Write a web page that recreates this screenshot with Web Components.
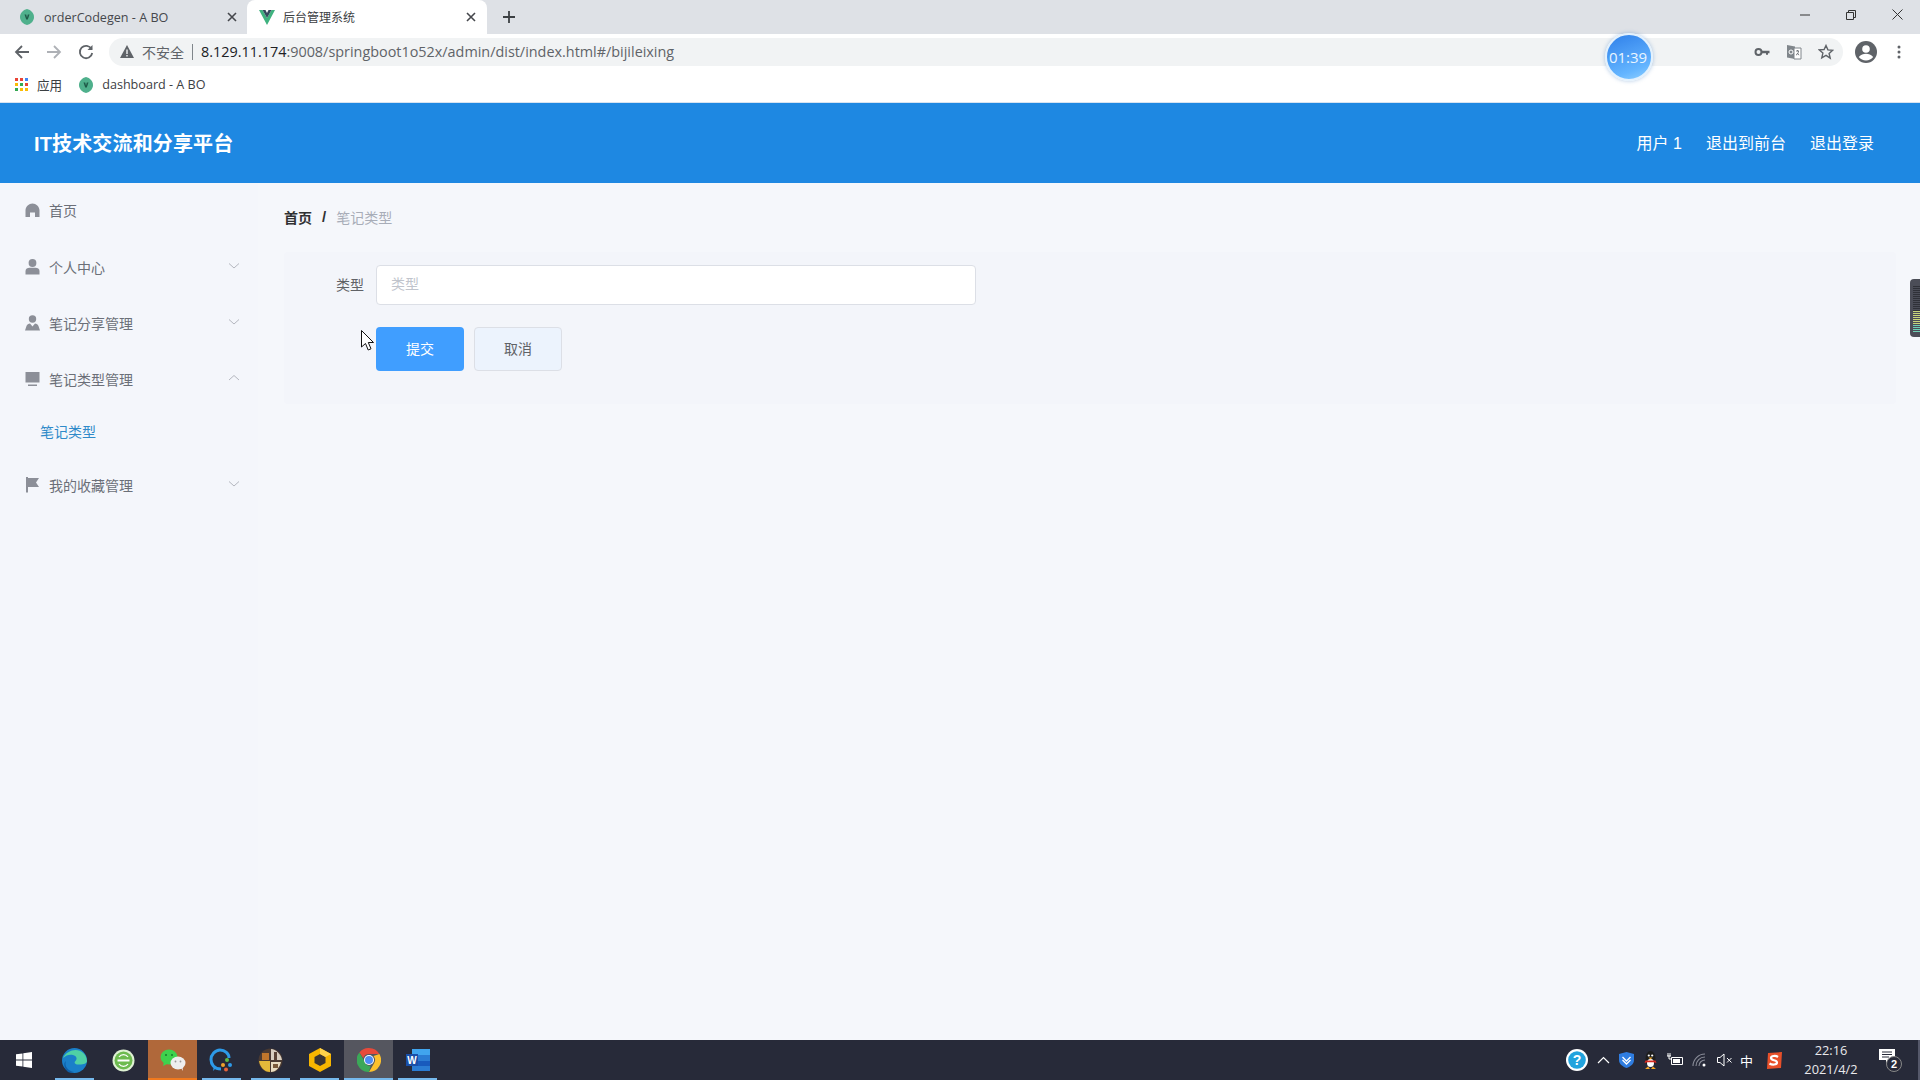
<!DOCTYPE html>
<html lang="zh">
<head>
<meta charset="utf-8">
<title>后台管理系统</title>
<style>
  html, body { margin: 0; height: 100%; overflow: hidden; }
  body {
    width: 1920px; height: 1080px; display: flex; flex-direction: column; position: relative;
    font-family: "Open Sans", "Noto Sans CJK SC", sans-serif;
    background: #f4f6fb;
  }
  app-shell { flex: 1; min-height: 0; }
</style>
</head>
<body>
<browser-chrome></browser-chrome>
<app-shell></app-shell>
<win-taskbar></win-taskbar>
<screen-overlays></screen-overlays>

<script>
const CJK = '"Liberation Sans", "Noto Sans CJK SC", sans-serif';

const vFavicon = /* html */ `<svg width="14" height="16" viewBox="0 0 14 16"><path d="M7 0c4 1 7 4 7 8s-3 7-7 8c-4-1-7-4-7-8s3-7 7-8z" fill="#4fb08c"/><path d="M4.5 5.5h1.7L7 8.5l.8-3h1.7L7.8 10.5H6.2z" fill="#1f5a48"/></svg>`;

class BrowserChrome extends HTMLElement {
  constructor() {
    super();
    this.attachShadow({ mode: 'open' });
  }

  static get styles() {
    return /* css */ `
      :host { display: block; font-size: 12.6px; color: #45474c; }
      svg { display: block; flex: none; }

      .strip { height: 34px; background: #dee1e6; display: flex; align-items: center; }
      .tab { width: 240px; height: 34px; padding: 0 11px 0 20px; box-sizing: border-box; display: flex; align-items: center; position: relative; }
      .tab:first-child { width: 247px; padding-right: 10px; }
      .tab.active { background: #fff; border-radius: 8px 8px 0 0; padding-left: 12px; }
      .tab .title { margin-left: 10px; flex: 1; white-space: nowrap; }
      .tab.active .title { margin-left: 8px; padding-bottom: 2px; font-family: ${CJK}; font-size: 12px; color: #3c4043; }
      .plus { margin-left: 16px; }
      .winbtns { margin-left: auto; display: flex; align-items: center; padding-right: 17px; }
      .winbtns svg { margin: 0 0 5px 36px; }

      .bar { height: 35px; background: #fff; display: flex; align-items: center; }
      .nav { width: 32px; display: flex; justify-content: center; }
      .nav:first-child { margin-left: 6px; }
      .omni { margin-left: 7px; width: 1734px; height: 28px; border-radius: 14px; background: #f1f3f4; display: flex; align-items: center; font-size: 14.4px; box-sizing: border-box; padding-left: 11px; }
      .unsafe { font-family: ${CJK}; font-size: 14px; color: #5f6368; margin-left: 8px; }
      .sep { width: 1px; height: 16px; background: #80868b; margin: 0 8px 0 8px; }
      .url { color: #5f6368; }
      .url b { font-weight: 400; color: #202124; }
      .omni-icons { margin-left: auto; display: flex; align-items: center; gap: 16px; padding-right: 9px; }
      .right { display: flex; align-items: center; margin-left: 12px; gap: 20px; }

      .marks { height: 31px; padding: 0 0 2px 15px; background: #fff; border-bottom: 1px solid #d7e3f1; display: flex; align-items: center; }
      .apps { font-family: ${CJK}; margin-left: 9px; color: #3c4043; }
      .mark { margin-left: 17px; display: flex; align-items: center; gap: 9px; color: #3c4043; }
    `;
  }

  connectedCallback() {
    this.render();
  }

  render() {
    const close = `<svg width="10" height="10" viewBox="0 0 10 10"><path d="M1 1l8 8M9 1l-8 8" stroke="#45474c" stroke-width="1.6"/></svg>`;
    this.shadowRoot.innerHTML = /* html */ `
    <style>${BrowserChrome.styles}</style>
    <div class="strip">
      <div class="tab">${vFavicon}<span class="title">orderCodegen - A BO</span>${close}</div>
      <div class="tab active">
        <svg width="16" height="15" viewBox="0 0 16 15"><path d="M0 0h3.5L8 8l4.5-8H16L8 15z" fill="#3fb27f"/><path d="M3.5 0h3L8 3l1.5-3h3L8 8z" fill="#35495e"/></svg>
        <span class="title">后台管理系统</span>${close}
      </div>
      <svg class="plus" width="12" height="12" viewBox="0 0 12 12"><path d="M6 0v12M0 6h12" stroke="#3c4043" stroke-width="1.8"/></svg>
      <div class="winbtns">
        <svg width="10" height="10" viewBox="0 0 10 10"><path d="M0 5h10" stroke="#333" stroke-width="1"/></svg>
        <svg width="10" height="10" viewBox="0 0 10 10"><path d="M.5 2.500h7v7h-7zM2.500 2.500v-2h7v7h-2" fill="none" stroke="#333"/></svg>
        <svg width="11" height="11" viewBox="0 0 11 11"><path d="M.5.5l10 10M10.500.5l-10 10" stroke="#333"/></svg>
      </div>
    </div>
    <div class="bar">
      <div class="nav"><svg width="16" height="16" viewBox="0 0 16 16"><path d="M15 8H2M8 2L2 8l6 6" fill="none" stroke="#5f6368" stroke-width="1.8"/></svg></div>
      <div class="nav"><svg width="16" height="16" viewBox="0 0 16 16"><path d="M1 8h13M8 2l6 6-6 6" fill="none" stroke="#aeb1b6" stroke-width="1.8"/></svg></div>
      <div class="nav"><svg width="16" height="16" viewBox="0 0 16 16"><path d="M13.5 5A6.200 6.200 0 1 0 14.200 9" fill="none" stroke="#5f6368" stroke-width="1.8"/><path d="M14.5 1v5h-5z" fill="#5f6368"/></svg></div>
      <div class="omni">
        <svg width="14" height="13" viewBox="0 0 14 13"><path d="M7 0l7 13H0z" fill="#5f6368"/><path d="M6.3 4.5h1.4v4.500H6.3zM6.3 10h1.4v1.400H6.3z" fill="#f1f3f4"/></svg>
        <span class="unsafe">不安全</span><span class="sep"></span>
        <span class="url"><b>8.129.11.174</b>:9008/springboot1o52x/admin/dist/index.html#/bijileixing</span>
        <div class="omni-icons">
          <svg width="16" height="16" viewBox="0 0 16 16"><circle cx="4.5" cy="8" r="3" fill="none" stroke="#5f6368" stroke-width="2"/><path d="M7 6.700h8.500v2.600H14v1.500h-2V9.300H7z" fill="#5f6368"/></svg>
          <svg width="16" height="16" viewBox="0 0 16 16"><path d="M1 1l8 1.500V15l-8-1.500z" fill="#80868b"/><path d="M8 4h7v11H8z" fill="#fff" stroke="#80868b"/><path d="M10 7h3M11.500 6v1M12.500 7c0 2-1 3.500-2.500 4M11 9c.5 1 1.200 1.600 2.200 2" fill="none" stroke="#5f6368" stroke-width=".8"/><circle cx="5" cy="8" r="2" fill="none" stroke="#fff"/></svg>
          <svg width="16" height="16" viewBox="0 0 16 16"><path d="M8 1.500l1.900 4.400 4.800.4-3.600 3.200 1.100 4.700L8 11.300l-4.200 2.500 1.100-4.700-3.600-3.200 4.800-.4z" fill="none" stroke="#5f6368" stroke-width="1.4"/></svg>
        </div>
      </div>
      <div class="right">
        <svg width="22" height="22" viewBox="0 0 22 22"><circle cx="11" cy="11" r="11" fill="#5f6368"/><circle cx="11" cy="8" r="3.800" fill="#fff"/><path d="M3.800 16c2-2.600 4.500-3.300 7.200-3.300s5.200.7 7.200 3.300c-1.800 2.200-4.300 3.400-7.200 3.400s-5.400-1.200-7.200-3.400z" fill="#fff"/></svg>
        <svg width="4" height="14" viewBox="0 0 4 14"><circle cx="2" cy="2" r="1.5" fill="#5f6368"/><circle cx="2" cy="7" r="1.5" fill="#5f6368"/><circle cx="2" cy="12" r="1.5" fill="#5f6368"/></svg>
      </div>
    </div>
    <div class="marks">
      <svg width="13" height="13" viewBox="0 0 13 13">
        <path d="M0 0h3v3H0z" fill="#ea4335"/><path d="M5 0h3v3H5z" fill="#ea4335"/><path d="M10 0h3v3h-3z" fill="#4285f4"/>
        <path d="M0 5h3v3H0z" fill="#fbbc05"/><path d="M5 5h3v3H5z" fill="#34a853"/><path d="M10 5h3v3h-3z" fill="#ea4335"/>
        <path d="M0 10h3v3H0z" fill="#34a853"/><path d="M5 10h3v3H5z" fill="#fbbc05"/><path d="M10 10h3v3h-3z" fill="#fbbc05"/>
      </svg>
      <span class="apps">应用</span>
      <span class="mark">${vFavicon}<span>dashboard - A BO</span></span>
    </div>`;
  }
}

class AppHeader extends HTMLElement {
  constructor() {
    super();
    this.attachShadow({ mode: 'open' });
  }

  connectedCallback() {
    this.shadowRoot.innerHTML = /* html */ `
    <style>
      :host {
        display: flex; align-items: center; height: 80px; flex: none; background: #1e88e2; color: #fff;
        font-family: ${CJK}; padding: 0 46px 2px 34px; box-sizing: border-box;
      }
      .brand { font-size: 20px; font-weight: 700; letter-spacing: .15px; flex: 1; }
      nav { display: flex; gap: 24px; font-size: 16px; }
    </style>
    <div class="brand"><slot name="brand"></slot></div>
    <nav><slot></slot></nav>`;
  }
}

class MenuItem extends HTMLElement {
  constructor() {
    super();
    this.attachShadow({ mode: 'open' });
  }

  static get icons() {
    return {
      home: `<path d="M7.500 1.500C11 1.500 14.500 4.500 14.500 8.500V15h-4.500v-4.500H5V15H.5V8.500C.5 4.500 4 1.500 7.500 1.500z"/>`,
      user: `<circle cx="7.500" cy="4" r="3.900"/><path d="M.5 15.500v-3.500c0-2 2-3.200 4-3.200h6c2 0 4 1.200 4 3.200v3.500z"/>`,
      users: `<circle cx="7.500" cy="4" r="3.700"/><path d="M0 15.500l1.500-4.500c.5-1.500 2-2.500 3.500-2.500l2.500 3 2.500-3c1.500 0 3 1 3.500 2.500l1.500 4.500z"/>`,
      screen: `<path d="M.5 1h14v10.500H.5zM3 13.500h9V15H3z"/>`,
      flag: `<path d="M1 0h2v15.500H1zM3 1h11l-3 4.500 3 4.500H3z"/>`
    };
  }

  connectedCallback() {
    const icon = this.getAttribute('icon');
    const arrow = this.getAttribute('arrow');
    const path = arrow === 'up' ? 'M1 6l5-4.500L11 6' : 'M1 1.500L6 6l5-4.500';
    this.shadowRoot.innerHTML = /* html */ `
    <style>
      :host {
        display: flex; align-items: center; height: 56px; padding-left: 25px; box-sizing: border-box;
        font-size: 14px; color: #6b6f78; position: relative;
      }
      :host([first]) { padding-bottom: 2px; }
      :host([sub]) { height: 48px; padding-left: 40px; padding-bottom: 1px; color: #2f8ac9; }
      :host([tall]) { height: 60px; }
      svg.ic { fill: #8c8f98; margin-right: 9px; flex: none; }
      svg.ar { position: absolute; right: 18px; top: 50%; margin-top: -5px; }
    </style>
    ${icon ? `<svg class="ic" width="15" height="16" viewBox="0 0 15 16">${MenuItem.icons[icon]}</svg>` : ''}
    <slot></slot>
    ${arrow ? `<svg class="ar" width="12" height="8" viewBox="0 0 12 8"><path d="${path}" fill="none" stroke="#b4b7bf" stroke-width="1"/></svg>` : ''}`;
  }
}

class SideMenu extends HTMLElement {
  constructor() {
    super();
    this.attachShadow({ mode: 'open' });
  }

  connectedCallback() {
    this.shadowRoot.innerHTML = /* html */ `
    <style>
      :host { display: flex; flex-direction: column; width: 258px; flex: none; background: #f4f6fb; font-family: ${CJK}; }
    </style>
    <slot></slot>`;
  }
}

class BreadCrumb extends HTMLElement {
  constructor() {
    super();
    this.attachShadow({ mode: 'open' });
  }

  connectedCallback() {
    this.shadowRoot.innerHTML = /* html */ `
    <style>
      :host { display: flex; align-items: center; height: 69px; font-size: 14px; color: #a8adb8; font-family: ${CJK}; padding-bottom: 2px; box-sizing: border-box; }
      .home { color: #303133; font-weight: 700; }
      .sep { color: #303133; font-weight: 700; font-size: 15px; margin: 0 10px 0 10px; }
    </style>
    <span class="home">首页</span><span class="sep">/</span><span>笔记类型</span>`;
  }
}

class NoteForm extends HTMLElement {
  constructor() {
    super();
    this.attachShadow({ mode: 'open' });
  }

  connectedCallback() {
    this.shadowRoot.innerHTML = /* html */ `
    <style>
      :host { display: block; box-sizing: border-box; height: 152px; padding: 13px 0 0 0; background: #f3f5fa; border-radius: 4px; font-family: ${CJK}; font-size: 14px; }
      .row { display: flex; align-items: center; }
      .lab { width: 92px; padding: 0 12px 2px 0; box-sizing: border-box; text-align: right; color: #606266; }
      .input { width: 600px; height: 40px; box-sizing: border-box; background: #fff; border: 1px solid #dcdfe6; border-radius: 4px; padding: 0 14px; line-height: 37px; color: #c0c4cc; }
      .btns { margin: 22px 0 0 92px; display: flex; gap: 10px; }
      .btn { width: 88px; height: 44px; box-sizing: border-box; padding-bottom: 2px; border-radius: 4px; display: flex; align-items: center; justify-content: center; }
      .primary { background: #409eff; color: #fff; }
      .plain { background: #ecf3fd; color: #606266; border: 1px solid #dcdfe6; }
    </style>
    <div class="row"><span class="lab">类型</span><span class="input">类型</span></div>
    <div class="btns"><span class="btn primary">提交</span><span class="btn plain">取消</span></div>`;
  }
}

class AppShell extends HTMLElement {
  constructor() {
    super();
    this.attachShadow({ mode: 'open' });
  }

  connectedCallback() {
    this.shadowRoot.innerHTML = /* html */ `
    <style>
      :host { display: flex; flex-direction: column; }
      .body { flex: 1; display: flex; min-height: 0; }
      main { flex: 1; padding: 0 24px 0 26px; background: #f5f7fb; }
    </style>
    <app-header>
      <span slot="brand">IT技术交流和分享平台</span>
      <span>用户 1</span><span>退出到前台</span><span>退出登录</span>
    </app-header>
    <div class="body">
      <side-menu>
        <menu-item icon="home" first>首页</menu-item>
        <menu-item icon="user" arrow="down">个人中心</menu-item>
        <menu-item icon="users" arrow="down">笔记分享管理</menu-item>
        <menu-item icon="screen" arrow="up">笔记类型管理</menu-item>
        <menu-item sub>笔记类型</menu-item>
        <menu-item icon="flag" arrow="down" tall>我的收藏管理</menu-item>
      </side-menu>
      <main>
        <bread-crumb></bread-crumb>
        <note-form></note-form>
      </main>
    </div>`;
  }
}

class WinTaskbar extends HTMLElement {
  constructor() {
    super();
    this.attachShadow({ mode: 'open' });
  }

  static get styles() {
    return /* css */ `
      :host { display: flex; height: 40px; flex: none; background: #272a39; color: #fff; align-items: stretch; font-size: 12px; }
      svg { display: block; flex: none; }
      .start { width: 48px; display: flex; align-items: center; justify-content: center; }
      .slot { width: 49px; display: flex; align-items: center; justify-content: center; position: relative; }
      .slot::after { content: ""; position: absolute; left: 5px; right: 5px; bottom: 0; height: 2px; background: #76b9ed; }
      .slot.plain::after { display: none; }
      .slot.wechat { background: #b0683a; }
      .slot.wechat::after { left: 0; right: 0; background: #f0791e; }
      .slot.chrome { background: #55565f; }
      .slot.chrome::after { left: 0; right: 0; }
      .tray { margin-left: auto; display: flex; align-items: center; }
      .tray > * { margin-left: 9px; }
      .tray .ime { font-family: ${CJK}; font-size: 13px; margin-left: 7px; margin-right: 4px; }
      .clock { width: 74px; margin-left: 12px; text-align: center; line-height: 19px; font-size: 12.8px; color: #e9e9ec; }
      .tray .note { margin: 0 16px 0 10px; }
      .tray .edge { width: 2px; height: 40px; background: #55586a; margin: 0; }
    `;
  }

  connectedCallback() {
    this.shadowRoot.innerHTML = /* html */ `
    <style>${WinTaskbar.styles}</style>
    <div class="start"><svg width="16" height="16" viewBox="0 0 16 16" fill="#fff"><path d="M0 2.300l6.500-.9v6.200H0zM7.300 1.300L16 0v7.600H7.300zM0 8.400h6.500v6.200L0 13.700zM7.300 8.400H16V16l-8.700-1.300z"/></svg></div>
    <div class="slot" style="margin-left:2px"><svg width="25" height="25" viewBox="0 0 25 25"><circle cx="12.5" cy="12.5" r="12.5" fill="#1a7fc9"/><path d="M25 13c-.5-7-5.500-11-11.500-11C9 2 3 5 1 10c3-3 7-4 10-3 3.500 1 5 4 2 6.500-1 1 0 3 3 3 4 0 9-.5 9-3.500z" fill="#4fd0a5"/><path d="M6 24c-4-4-5-9-2-11-2 5 2 10 8 11-2 1-4.500.8-6 0z" fill="#0f5fa8"/></svg></div>
    <div class="slot plain"><svg width="23" height="23" viewBox="0 0 23 23"><circle cx="11.5" cy="11.5" r="11" fill="#dff2d4"/><circle cx="11.5" cy="11.5" r="9" fill="#6dbb4f"/><path d="M5.500 11.500h12" stroke="#fff" stroke-width="2"/><path d="M7 8a5.500 5.500 0 0 1 9 0M7 15a5.500 5.500 0 0 0 9 0" fill="none" stroke="#fff" stroke-width="1.3"/></svg></div>
    <div class="slot wechat"><svg width="26" height="22" viewBox="0 0 26 22"><ellipse cx="9" cy="8" rx="8.500" ry="7.500" fill="#3ed24d"/><path d="M4 13l-1 4 5-2.500z" fill="#3ed24d"/><ellipse cx="18" cy="14" rx="7.500" ry="6.500" fill="#eeeeef"/><path d="M21 19l2 3-.5-4z" fill="#eeeeef"/><circle cx="6" cy="6" r="1" fill="#167c2b"/><circle cx="12" cy="6" r="1" fill="#167c2b"/><circle cx="15.5" cy="12.5" r=".9" fill="#999"/><circle cx="20.5" cy="12.5" r=".9" fill="#999"/></svg></div>
    <div class="slot"><svg width="25" height="24" viewBox="0 0 25 24"><path d="M12 21C5 21 2 16 2 11.500S6 2 11 2s9 3.500 9 8" fill="none" stroke="#2d9ae8" stroke-width="3"/><path d="M7 20l-3 3 1-5z" fill="#2d9ae8"/><circle cx="18" cy="12" r="2" fill="#5dbb46"/><circle cx="14" cy="17" r="2" fill="#f0a22e"/><circle cx="21" cy="17" r="2" fill="#2d9ae8"/><circle cx="17" cy="21.5" r="2" fill="#e8633a"/></svg></div>
    <div class="slot"><svg width="25" height="25" viewBox="0 0 25 25"><circle cx="12.5" cy="12.5" r="12" fill="#4a3a32"/><path d="M1 13h11v11C6 24 2 19 1 13z" fill="#e3b93a"/><path d="M13 1c5 .5 10 5 11 11H13z" fill="#d8cfc0"/><path d="M4 5h7v7H4z" fill="#c0762c"/><path d="M16 4h3v8h-3z" fill="#5a4436"/><path d="M13 14h10c-1 5-5 10-10 10z" fill="#e8dcc0"/><path d="M15 16h5v4h-5z" fill="#7a5a3a"/></svg></div>
    <div class="slot"><svg width="22" height="24" viewBox="0 0 22 24"><path d="M11 0l11 6v12l-11 6L0 18V6z" fill="#f7b500"/><path d="M11 6l5.500 3v6L11 18l-5.500-3V9z" fill="#3a3432"/><path d="M11 0l11 6-5.500 3L11 6z" fill="#ffd24c"/></svg></div>
    <div class="slot chrome"><svg width="24" height="24" viewBox="0 0 24 24"><path d="M12 0a12 12 0 0 1 10.400 6H12a6 6 0 0 0-5.700 4.200L2.400 4.400A12 12 0 0 1 12 0z" fill="#e64a3b"/><path d="M22.400 6A12 12 0 0 1 12 24l5.200-9A6 6 0 0 0 16.500 8z" fill="#fbc02d"/><path d="M12 24A12 12 0 0 1 2.400 4.400l5.200 9a6 6 0 0 0 6 4.400z" fill="#3ba858"/><circle cx="12" cy="12" r="5" fill="#fff"/><circle cx="12" cy="12" r="4" fill="#4e8df5"/></svg></div>
    <div class="slot"><svg width="24" height="22" viewBox="0 0 24 22"><path d="M6 0h18v22H6z" fill="#2b7cd3"/><path d="M6 0h18v6H6z" fill="#41a5ee"/><path d="M6 12h18v5H6z" fill="#185abd"/><path d="M0 5h12v12H0z" fill="#1a4fa8"/><text x="6" y="14.500" font-size="10" font-weight="700" text-anchor="middle" fill="#fff" font-family="Liberation Sans, sans-serif">W</text></svg></div>
    <div class="tray">
      <svg width="22" height="22" viewBox="0 0 22 22"><circle cx="11" cy="11" r="11" fill="#fff"/><circle cx="11" cy="11" r="8.800" fill="#22a3dd"/><text x="11" y="16" text-anchor="middle" font-size="14" font-weight="700" fill="#fff" font-family="Liberation Sans, sans-serif">?</text></svg>
      <svg width="13" height="8" viewBox="0 0 13 8"><path d="M1 7l5.500-5.500L12 7" fill="none" stroke="#fff" stroke-width="1.2"/></svg>
      <svg width="15" height="16" viewBox="0 0 15 16"><path d="M7.500 0L15 2v6c0 4-3.500 6.500-7.500 8C3.500 14.500 0 12 0 8V2z" fill="#2f7de1"/><path d="M3.500 5l4 4 4-4M3.500 8l4 4 4-4" fill="none" stroke="#fff" stroke-width="1.3"/></svg>
      <svg width="15" height="18" viewBox="0 0 15 18"><ellipse cx="7.500" cy="8" rx="5" ry="8" fill="#1e1e1e"/><ellipse cx="7.5" cy="12" rx="3.500" ry="4" fill="#fff"/><circle cx="5.8" cy="4.500" r="1.100" fill="#fff"/><circle cx="9.200" cy="4.500" r="1.100" fill="#fff"/><path d="M5.500 6.500h4L7.500 8.500z" fill="#f5a623"/><path d="M2.500 9.500h10l1 2.500-3-.8h-6l-3 .8z" fill="#d52a20"/><path d="M2 18h5l-2-2.500zM8 18h5l-3-2.500z" fill="#f5a623"/></svg>
      <svg width="16" height="14" viewBox="0 0 16 14"><path d="M4.500 4.500h11v7h-11z" fill="none" stroke="#fff"/><path d="M6 6h7v4H6z" fill="#fff"/><path d="M0 3h4M1 0v3M3 0v3M2 3v3h3" stroke="#fff" fill="none"/></svg>
      <svg width="16" height="14" viewBox="0 0 16 14"><path d="M1 13a12 12 0 0 1 12-12M4 13a9 9 0 0 1 9-9M7 13a6 6 0 0 1 6-6" fill="none" stroke="#8a8d99" stroke-width="1.1"/><circle cx="12" cy="12" r="1.5" fill="#fff"/></svg>
      <svg width="16" height="14" viewBox="0 0 16 14"><path d="M.5 4.500h2.500L7 1v12L3 9.500H.5z" fill="none" stroke="#fff"/><path d="M10 5l4.500 4.500M14.500 5L10 9.500" stroke="#fff"/></svg>
      <span class="ime">中</span>
      <svg width="16" height="17" viewBox="0 0 16 17"><path d="M2 1l14-1-1 16-14 1z" fill="#e8502a"/><path d="M12 5c-2-1.500-7-1.500-7 1 0 3 6 1.500 6 4.500 0 2.500-5 2.500-7.500 1" fill="none" stroke="#fff" stroke-width="2.2"/></svg>
      <div class="clock">22:16<br>2021/4/2</div>
      <svg class="note" width="24" height="24" viewBox="0 0 24 24"><path d="M1 1h16v11h-6l-3 3v-3H1z" fill="#fff"/><path d="M4 4h10M4 6.500h10M4 9h7" stroke="#272a39"/><circle cx="16" cy="16" r="7.500" fill="#272a39" stroke="#888" /><text x="16" y="20" text-anchor="middle" font-size="11" font-weight="700" fill="#fff" font-family="Liberation Sans, sans-serif">2</text></svg>
      <div class="edge"></div>
    </div>`;
  }
}

class ScreenOverlays extends HTMLElement {
  constructor() {
    super();
    this.attachShadow({ mode: 'open' });
  }

  connectedCallback() {
    this.shadowRoot.innerHTML = /* html */ `
    <style>
      :host { display: contents; }
      .timer {
        position: absolute; left: 1605px; top: 33px; width: 48px; height: 48px; box-sizing: border-box;
        border-radius: 50%; border: 2px solid #e3f1fd; background: linear-gradient(160deg, #2f80ea, #64b5ff 75%, #8fd0ff);
        box-shadow: 0 0 4px rgba(60,120,190,.4); color: #eaf5ff; font-size: 15px; padding-right: 2px;
        display: flex; align-items: center; justify-content: center;
      }
      .cursor { position: absolute; left: 361px; top: 330px; }
      .widget {
        position: absolute; left: 1910px; top: 279px; width: 10px; height: 58px; background: #4b4d57;
        border-radius: 4px 0 0 4px; box-sizing: border-box; padding: 7px 0 0 3px;
      }
      .widget i { display: block; width: 7px; height: 25px; background: repeating-linear-gradient(#2f3138 0 1px, #4b4d57 1px 2px); }
      .widget b { display: block; width: 7px; height: 14px; background: repeating-linear-gradient(#c8d67a 0 1px, #4b4d57 1px 2px); }
      .widget u { display: block; width: 7px; height: 8px; background: repeating-linear-gradient(#6fcfb4 0 1px, #4b4d57 1px 2px); }
    </style>
    <div class="timer">01:39</div>
    <svg class="cursor" width="13" height="21" viewBox="0 0 13 21"><path d="M.5.5v16.500l4-3.500 2.700 6.500 2.800-1.200-2.700-6.300h5.200z" fill="#fff" stroke="#111"/></svg>
    <div class="widget"><i></i><b></b><u></u></div>`;
  }
}

customElements.define('browser-chrome', BrowserChrome);
customElements.define('app-header', AppHeader);
customElements.define('menu-item', MenuItem);
customElements.define('side-menu', SideMenu);
customElements.define('bread-crumb', BreadCrumb);
customElements.define('note-form', NoteForm);
customElements.define('app-shell', AppShell);
customElements.define('win-taskbar', WinTaskbar);
customElements.define('screen-overlays', ScreenOverlays);
</script>
</body>
</html>
